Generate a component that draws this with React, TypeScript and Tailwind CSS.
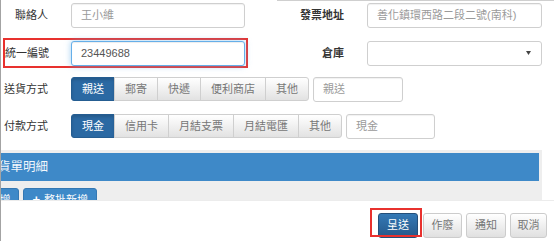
import React from 'react';
import clsx from 'clsx';

const font = "font-['Liberation_Sans','Noto_Sans_CJK_TC',sans-serif]";

// 單純的 bootstrap 風格按鈕群組
const Segmented = ({ items, active }: { items: string[]; active: number }) => (
    <div className="flex h-[24px]">
        {items.map((t, i) => (
            <span
                key={t}
                className={clsx(
                    'flex items-center px-[10px] border text-[11px] leading-none',
                    i > 0 && '-ml-px',
                    i === 0 && 'rounded-l-[3px]',
                    i === items.length - 1 && 'rounded-r-[3px]',
                    i === active
                        ? 'bg-[#2b69a3] border-[#255d91] text-white shadow-[inset_0_2px_3px_rgba(0,0,0,0.15)]'
                        : 'bg-gradient-to-b from-[#ffffff] to-[#e2e2e2] border-[#cfcfcf] text-[#767676]'
                )}
            >
                {t}
            </span>
        ))}
    </div>
);

const Field = ({ text, className, dark }: { text: string; className?: string; dark?: boolean }) => (
    <div
        className={clsx(
            'h-[25px] flex items-center px-[9px] rounded-[3px] border border-[#cfcfcf] bg-white text-[11px] shadow-[inset_0_1px_1px_rgba(0,0,0,0.06)]',
            dark ? 'text-[#555]' : 'text-[#9a9a9a]',
            className
        )}
    >
        {text}
    </div>
);

const FooterButton = ({ label, primary }: { label: string; primary?: boolean }) => (
    <span
        className={clsx(
            'h-[25px] flex items-center justify-center rounded-[3px] border text-[11px]',
            primary
                ? 'w-[40px] bg-gradient-to-b from-[#3479b6] to-[#25598a] border-[#234f7a] text-white'
                : 'bg-gradient-to-b from-[#ffffff] to-[#e0e0e0] border-[#cccccc] text-[#777]'
        )}
    >
        {label}
    </span>
);

export default function App() {
    return (
        <div className={clsx('w-[554px] h-[241px] overflow-hidden bg-white border-l border-[#a3a3a3] text-[#333]', font)}>
            {/* top edge */}
            <div className="h-px ml-[276px] bg-[#cfcfcf]" />

            {/* 聯絡人 / 發票地址 */}
            <div className="flex items-center h-[25px] mt-[2px]">
                <span className="w-[47px] text-right text-[11px]">聯絡人</span>
                <Field text="王小維" className="ml-[23px] w-[174px]" />
                <span className="w-[99px] text-right text-[11px] font-semibold">發票地址</span>
                <Field text="善化鎮環西路二段二號(南科)" className="ml-[23px] w-[175px]" />
            </div>

            {/* 統一編號 / 倉庫 */}
            <div className="flex items-center mt-[10px]">
                <div className="ml-[2px] w-[245px] h-[30px] border-2 border-[#e8312e] flex items-center">
                    <span className="w-[43px] text-right text-[11px] whitespace-nowrap">統一編號</span>
                    <div className="ml-[23px] w-[174px] h-[25px] flex items-center px-[9px] rounded-[3px] border border-[#66afe9] bg-white text-[11px] text-[#555] shadow-[inset_0_1px_1px_rgba(0,0,0,0.075),0_0_6px_rgba(102,175,233,0.6)]">
                        23449688
                    </div>
                </div>
                <span className="w-[96px] text-right text-[11px] font-semibold">倉庫</span>
                <div className="ml-[23px] w-[175px] h-[25px] flex items-center justify-end pr-[10px] rounded-[3px] border border-[#cfcfcf] bg-white">
                    <svg width="5" height="4" viewBox="0 0 5 4">
                        <path d="M0 0h5L2.5 4z" fill="#444" />
                    </svg>
                </div>
            </div>

            {/* 送貨方式 */}
            <div className="flex items-center h-[24px] mt-[9px]">
                <span className="w-[47px] text-right text-[11px]">送貨方式</span>
                <div className="ml-[23px]">
                    <Segmented items={['親送', '郵寄', '快遞', '便利商店', '其他']} active={0} />
                </div>
                <Field text="親送" className="ml-[4px] w-[90px] h-[24px]" />
            </div>

            {/* 付款方式 */}
            <div className="flex items-center h-[24px] mt-[13px]">
                <span className="w-[47px] text-right text-[11px]">付款方式</span>
                <div className="ml-[23px]">
                    <Segmented items={['現金', '信用卡', '月結支票', '月結電匯', '其他']} active={0} />
                </div>
                <Field text="現金" className="ml-[4px] w-[89px] h-[24px]" />
            </div>

            {/* 貨單明細 panel */}
            <div className="mt-[12px] w-[541px] h-[50px] bg-[#eeeeee] overflow-hidden pt-[3px] pr-[3px]">
                <div className="h-[28px] bg-[#3e89c8] flex items-center overflow-hidden">
                    <span className="-ml-[3px] text-[12.5px] text-[#f2f7fc] whitespace-nowrap">貨單明細</span>
                </div>
                <div className="flex gap-[4px] mt-[7px]">
                    <span className="-ml-[32px] h-[24px] flex items-center gap-[4px] px-[8px] rounded-[3px] bg-[#3e89c8] border border-[#3478b3] text-white text-[11px]">
                        <span className="font-bold">+</span>新增
                    </span>
                    <span className="h-[24px] flex items-center gap-[4px] px-[8px] rounded-[3px] bg-[#3e89c8] border border-[#3478b3] text-white text-[11px]">
                        <span className="font-bold text-[13px]">+</span>整批新增
                    </span>
                </div>
            </div>

            {/* footer */}
            <div className="border-t border-[#ececec] flex justify-end gap-[4px] pr-[7px] pt-[12px]">
                <div className="relative">
                    <FooterButton label="呈送" primary />
                    <div className="absolute -left-[8px] -top-[5px] w-[52px] h-[29px] border-2 border-[#e8312e]" />
                </div>
                <div className="ml-[1px] w-[39px]">
                    <FooterButton label="作廢" />
                </div>
                <div className="w-[40px]">
                    <FooterButton label="通知" />
                </div>
                <div className="w-[37px]">
                    <FooterButton label="取消" />
                </div>
            </div>
        </div>
    );
}
